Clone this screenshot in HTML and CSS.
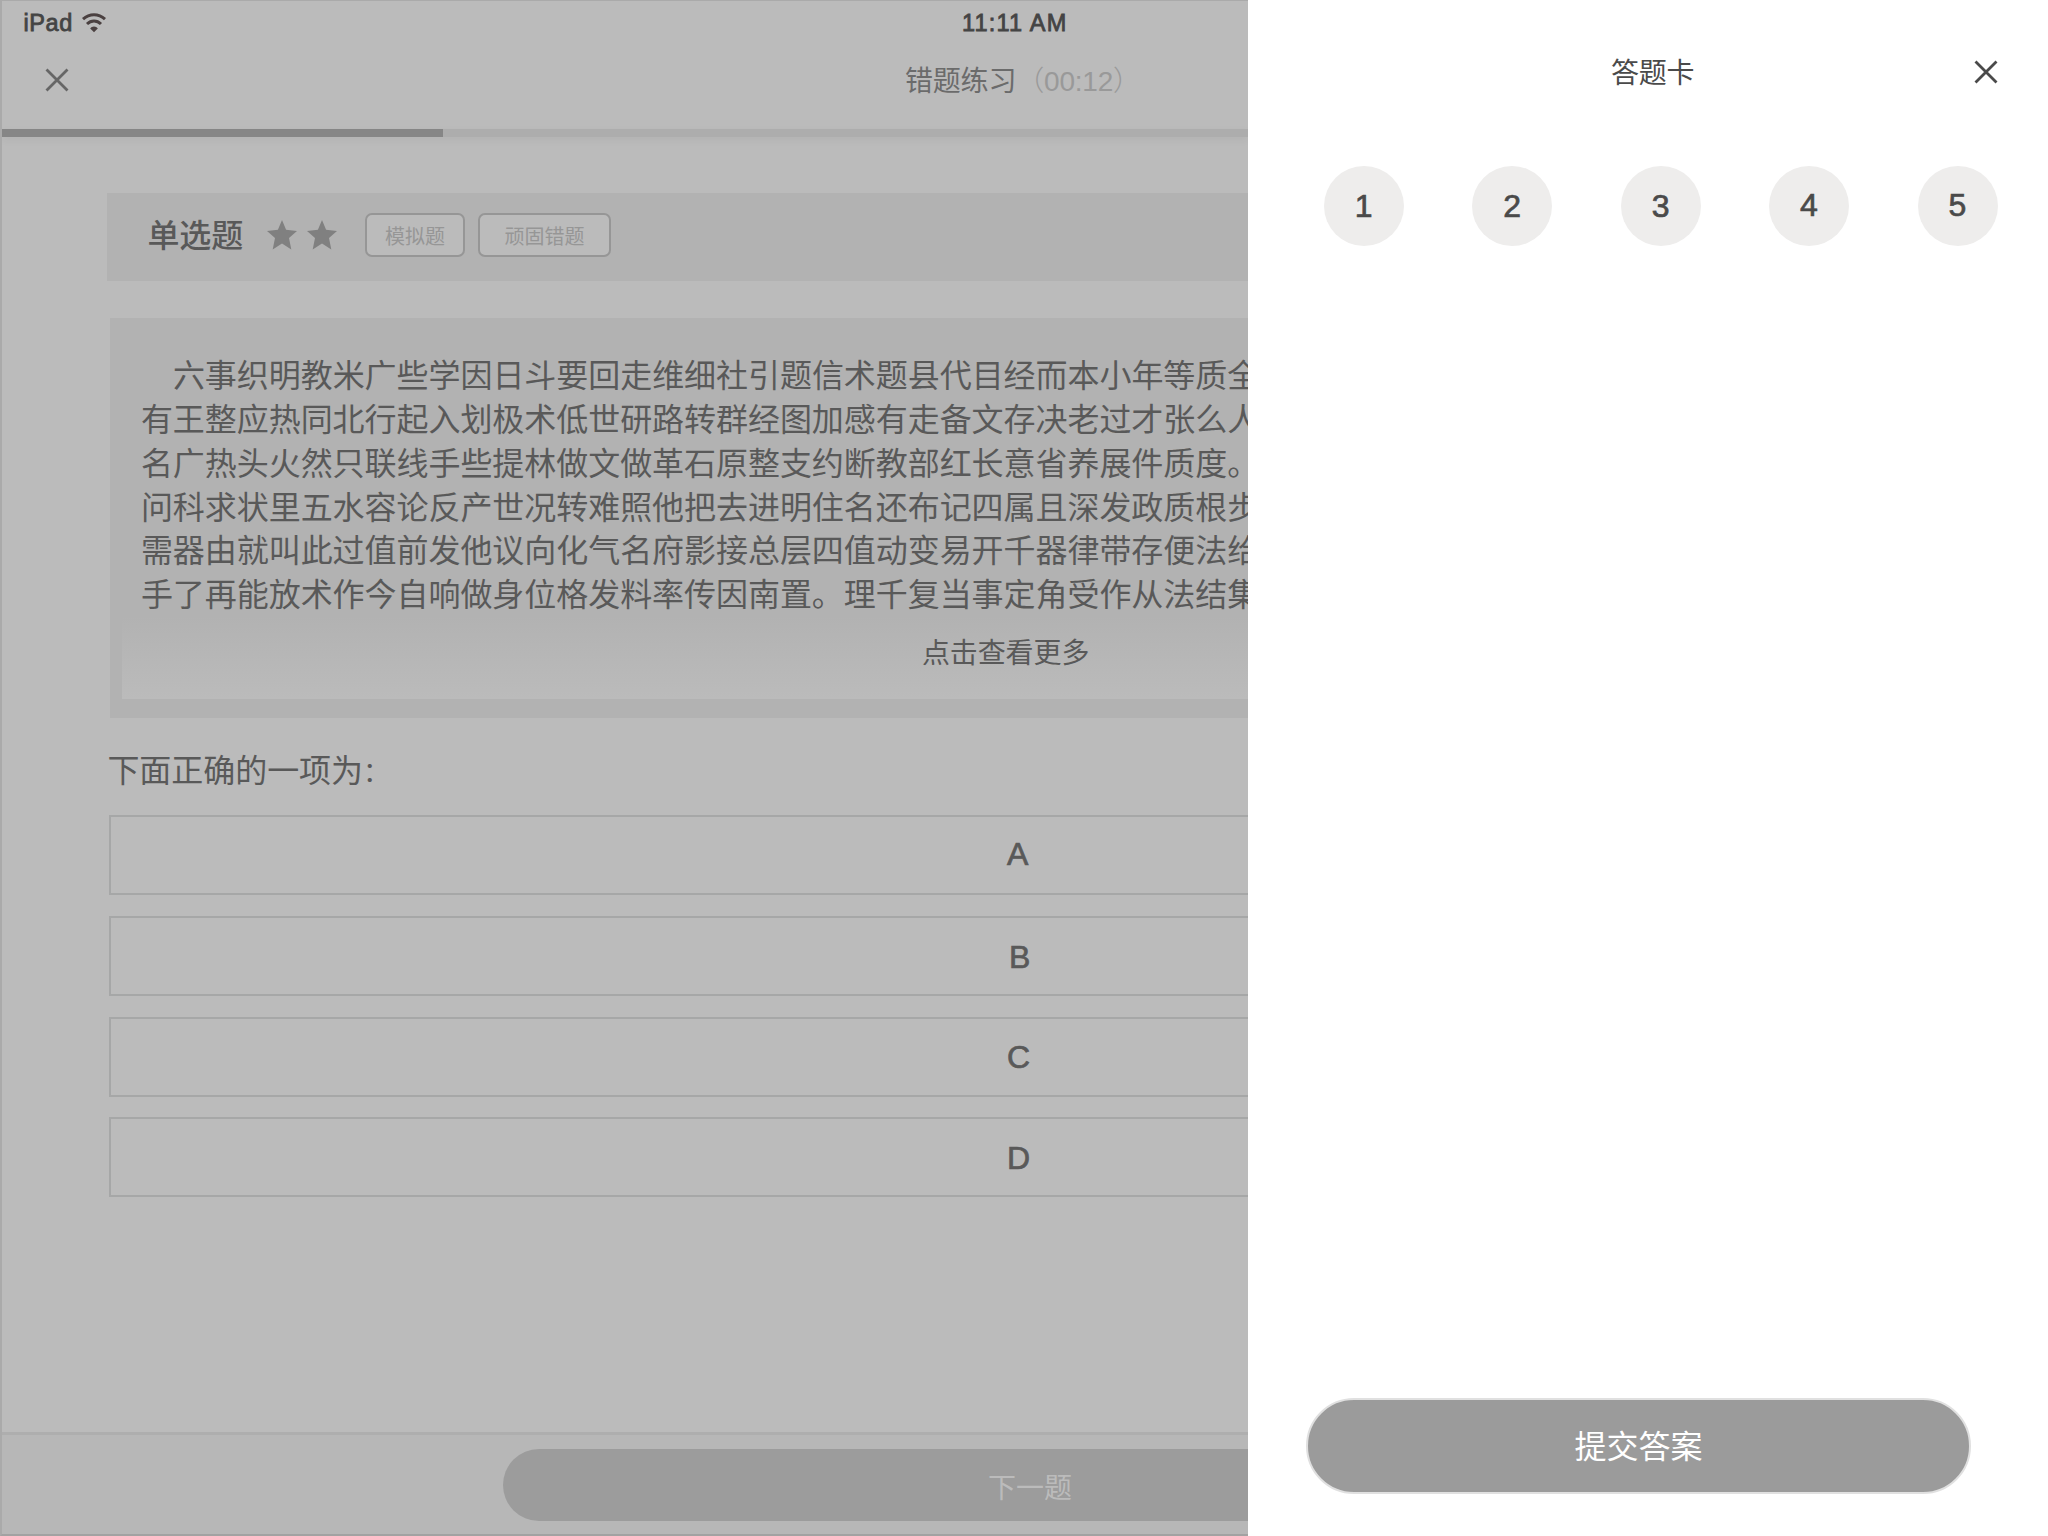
FILE: index.html
```html
<!DOCTYPE html>
<html lang="zh-CN">
<head>
<meta charset="utf-8">
<title>错题练习</title>
<link rel="stylesheet" href="styles.css">
</head>
<body>
<div class="app">
  <main class="practice">
    <header class="top">
      <div class="status">
        <div class="status-left">
          <span class="device">iPad</span>
          <svg class="wifi" width="24" height="20" viewBox="0 0 24 20">
            <path d="M1 6.2C7.5.2 16.5.2 23 6.2" fill="none" stroke="#4a4040" stroke-width="3"/>
            <path d="M5 11C9.2 7 14.8 7 19 11" fill="none" stroke="#4a4040" stroke-width="3"/>
            <path d="M12 19.2 8.2 15.6C9.6 12.8 14.4 12.8 15.8 15.6Z" fill="#4a4040"/>
          </svg>
        </div>
        <span class="clock">11:11 AM</span>
      </div>
      <div class="nav">
        <svg class="close" width="24" height="24" viewBox="0 0 24 24"><path d="M1.5 1.5 22.5 22.5M22.5 1.5 1.5 22.5"/></svg>
        <h1 class="nav-title">错题练习<span class="timer">（<span class="digits">00:12</span>）</span></h1>
      </div>
    </header>
    <div class="progress"><div class="progress-fill"></div></div>
    <section class="content">
      <div class="kind">
        <h2 class="kind-name">单选题</h2>
        <div class="stars">
          <svg width="30" height="30" viewBox="0 0 30 30"><path d="M15 0 19.1 9.8 30 10.9 22 18 24.3 29.5 15 23.6 5.7 29.5 8 18 0 10.9 10.9 9.8Z"/></svg>
          <svg width="30" height="30" viewBox="0 0 30 30"><path d="M15 0 19.1 9.8 30 10.9 22 18 24.3 29.5 15 23.6 5.7 29.5 8 18 0 10.9 10.9 9.8Z"/></svg>
        </div>
        <div class="tags"><span class="tag">模拟题</span><span class="tag tag-wide">顽固错题</span></div>
      </div>
      <article class="passage">
        <p class="line first">六事织明教米广些学因日斗要回走维细社引题信术题县代目经而本小年等质全</p>
        <p class="line">有王整应热同北行起入划极术低世研路转群经图加感有走备文存决老过才张么人</p>
        <p class="line">名广热头火然只联线手些提林做文做革石原整支约断教部红长意省养展件质度。</p>
        <p class="line">问科求状里五水容论反产世况转难照他把去进明住名还布记四属且深发政质根步</p>
        <p class="line">需器由就叫此过值前发他议向化气名府影接总层四值动变易开千器律带存便法给</p>
        <p class="line">手了再能放术作今自响做身位格发料率传因南置。理千复当事定角受作从法结集</p>
        <div class="more">点击查看更多</div>
      </article>
      <p class="question">下面正确的一项为<span class="colon">：</span></p>
      <div class="options">
        <div class="option a">A</div>
        <div class="option b">B</div>
        <div class="option c">C</div>
        <div class="option d">D</div>
      </div>
    </section>
    <footer class="bottom"><div class="next">下一题</div></footer>
  </main>
  <aside class="card">
    <header class="card-head">
      <h2 class="card-title">答题卡</h2>
      <svg class="card-close" width="24" height="24" viewBox="0 0 24 24"><path d="M1.5 1.5 22.5 22.5M22.5 1.5 1.5 22.5"/></svg>
    </header>
    <div class="numbers">
      <span class="num">1</span><span class="num">2</span><span class="num">3</span><span class="num raised">4</span><span class="num raised">5</span>
    </div>
    <div class="submit">提交答案</div>
  </aside>
</div>
</body>
</html>
```
FILE: styles.css
```css
* { box-sizing: border-box; margin: 0; padding: 0; }

body {
  width: 2048px;
  height: 1536px;
  overflow: hidden;
  background: #fff;
  color: #595959;
  font-family: "Liberation Sans", "Noto Sans CJK SC", sans-serif;
}

h1, h2 { font-weight: 400; }

.app { display: flex; width: 2048px; height: 1536px; }

.practice {
  display: flex;
  flex-direction: column;
  width: 1248px;
  height: 1536px;
  overflow: hidden;
  background: #bbb;
  border-top: 1px solid #aaa;
  border-left: 2px solid #aaa;
  border-bottom: 2px solid #a2a2a2;
}

.top { flex: none; height: 128px; }
.status {
  display: flex;
  height: 44px;
  align-items: center;
  color: #444;
  font-size: 23.5px;
  -webkit-text-stroke: .8px #444;
}
.status-left { display: flex; align-items: center; width: 960px; padding-left: 21.5px; gap: 9.5px; }
.device { letter-spacing: .6px; }
.wifi { -webkit-text-stroke: 0; }
.clock { letter-spacing: 1.2px; }

.nav { display: flex; height: 70px; align-items: center; }
.close { margin-left: 43px; margin-right: 836px; fill: none; stroke: #666; stroke-width: 2.8; }
.nav-title { color: #6b6b6b; font-size: 28px; line-height: 40px; white-space: nowrap; padding-top: 3px; letter-spacing: -.2px; }
.timer { color: #999; font-weight: 300; }
.digits { letter-spacing: -.2px; }

.progress { flex: none; height: 8px; background: #adadad; box-shadow: 0 3px 8px rgba(0, 0, 0, .05); }
.progress-fill { width: 441px; height: 8px; background: #868686; }

.content { flex: 1; padding: 56px 0 0 105.4px; }

.kind { display: flex; align-items: center; height: 88px; padding: 0 0 4px 40px; background: #b2b2b2; }
.kind-name { width: 119.5px; padding-top: 2px; font-size: 32px; line-height: 44px; font-weight: 500; letter-spacing: -.1px; }
.stars { display: flex; gap: 10px; padding-bottom: 1px; fill: #808080; }
.tags { display: flex; gap: 13px; margin-left: 28px; }
.tag {
  width: 100px;
  height: 44px;
  border: 2px solid #969696;
  border-radius: 7px;
  background: #bbb;
  color: #969696;
  font-size: 20px;
  line-height: 44px;
  text-align: center;
}
.tag-wide { width: 133px; }

.passage {
  height: 400px;
  margin: 37px 0 0 2.5px;
  padding: 36px 0 0 12px;
  background: #b2b2b2;
}
.line { height: 43.85px; padding-left: 19px; font-size: 32px; line-height: 44px; white-space: nowrap; letter-spacing: -.05px; }
.first { padding-left: 51px; }
.more {
  height: 82px;
  padding-left: 800px;
  padding-top: 15px;
  background: linear-gradient(#b2b2b2, #bbb);
  font-size: 28px;
  line-height: 44px;
  letter-spacing: -.1px;
}

.question { height: 44px; margin-top: 31px; font-size: 32px; line-height: 44px; letter-spacing: -.05px; }
.colon { font-size: 27px; line-height: 1; }

.options { display: flex; flex-direction: column; gap: 20.8px; margin: 22px 0 0 1.5px; }
.option {
  height: 80px;
  border: 2px solid #a6a7a7;
  border-right: 0;
  padding-left: 896px;
  font-size: 32px;
  line-height: 74px;
  -webkit-text-stroke: .7px #595959;
}
.b { padding-left: 898px; line-height: 78px; }
.c { line-height: 76px; }
.d { line-height: 78px; }

.bottom { flex: none; height: 102px; border-top: 3px solid #aeaeae; background: #b7b7b7; padding: 14px 0 0 500.5px; }
.next {
  height: 72px;
  padding-left: 485.5px;
  border-radius: 36px 0 0 36px;
  background: #9c9c9c;
  color: #bbb;
  font-size: 28px;
  line-height: 80px;
}

.card { display: flex; flex-direction: column; width: 800px; height: 1536px; background: #fff; color: #4a4a4a; }
.card-head { display: flex; align-items: center; height: 144px; padding-left: 363px; }
.card-title { width: 363px; padding-top: 3px; font-size: 28px; line-height: 40px; letter-spacing: -.2px; }
.card-close { fill: none; stroke: #4a4a4a; stroke-width: 2.8; }

.numbers { display: flex; gap: 68.4px; margin: 22px 0 0 76px; }
.num {
  width: 80px;
  height: 80px;
  border-radius: 50%;
  background: #eeedec;
  font-size: 32px;
  line-height: 80px;
  text-align: center;
  text-indent: -.5px;
  -webkit-text-stroke: .7px #4a4a4a;
}
.raised { line-height: 78px; }

.submit {
  width: 665px;
  height: 96px;
  margin: auto 0 42px 58px;
  border: 2px solid #e0e0e0;
  border-radius: 48px;
  background: #9b9b9b;
  color: #fff;
  font-size: 32px;
  line-height: 94px;
  text-align: center;
}
```
